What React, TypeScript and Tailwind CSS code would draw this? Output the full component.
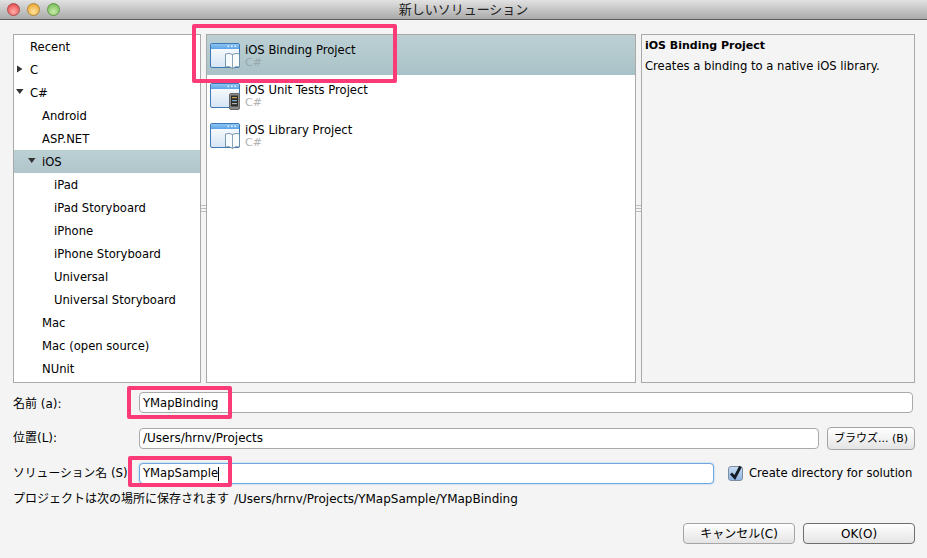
import React from 'react';

const font = { sans: "font-['DejaVu_Sans','Noto_Sans_CJK_JP',sans-serif]" };

const leftRows = [
  { label: 'Recent', indent: 'pl-[16px]' },
  { label: 'C', indent: 'pl-[16px]', arrow: 'right', arrowPad: 'left-[1px]' },
  { label: 'C#', indent: 'pl-[16px]', arrow: 'down', arrowPad: 'left-[2px]' },
  { label: 'Android', indent: 'pl-[28px]' },
  { label: 'ASP.NET', indent: 'pl-[28px]' },
  { label: 'iOS', indent: 'pl-[28px]', arrow: 'down', arrowPad: 'left-[14px]', selected: true },
  { label: 'iPad', indent: 'pl-[40px]' },
  { label: 'iPad Storyboard', indent: 'pl-[40px]' },
  { label: 'iPhone', indent: 'pl-[40px]' },
  { label: 'iPhone Storyboard', indent: 'pl-[40px]' },
  { label: 'Universal', indent: 'pl-[40px]' },
  { label: 'Universal Storyboard', indent: 'pl-[40px]' },
  { label: 'Mac', indent: 'pl-[28px]' },
  { label: 'Mac (open source)', indent: 'pl-[28px]' },
  { label: 'NUnit', indent: 'pl-[28px]' },
];

const projects = [
  { name: 'iOS Binding Project', kind: 'book', selected: true },
  { name: 'iOS Unit Tests Project', kind: 'phone' },
  { name: 'iOS Library Project', kind: 'book' },
];

const Arrow = ({ dir }: { dir: string }) => (
  <svg width="9" height="9" viewBox="0 0 9 9">
    {dir === 'right' ? <path d="M2 1.5 L7.5 5 L2 8.5 Z" fill="#333" /> : <path d="M0 2 L7.5 2 L3.75 7 Z" fill="#333" />}
  </svg>
);

const ProjectIcon = ({ kind }: { kind: string }) => (
  <svg width="31" height="28" viewBox="0 0 31 28" className="shrink-0">
    <defs>
      <linearGradient id="winBody" x1="0" y1="0" x2="0" y2="1">
        <stop offset="0" stopColor="#ffffff" />
        <stop offset="1" stopColor="#d5e4f4" />
      </linearGradient>
      <linearGradient id="winBar" x1="0" y1="0" x2="0" y2="1">
        <stop offset="0" stopColor="#8cc4f5" />
        <stop offset="1" stopColor="#5fa3e6" />
      </linearGradient>
    </defs>
    <rect x="0.5" y="1.5" width="29" height="24" rx="1.5" fill="url(#winBody)" stroke="#3f79b5" />
    <rect x="1" y="2" width="28" height="5" fill="url(#winBar)" />
    <rect x="17.5" y="3.5" width="1.6" height="1.6" fill="#e4f2ff" />
    <rect x="21" y="3.5" width="1.6" height="1.6" fill="#e4f2ff" />
    <rect x="24.5" y="3.5" width="1.6" height="1.6" fill="#e4f2ff" />
    {kind === 'book' ? (
      <g>
        <path d="M15.5 12 Q19 10.5 22.5 12.5 Q26 10.5 29.5 12 L29.5 25 Q26 23.5 22.5 26.5 Q19 23.5 15.5 25 Z" fill="#f8fbfc" stroke="#5c8399" strokeWidth="0.8" />
        <path d="M22.5 12.5 V26.5" stroke="#6c8ea3" strokeWidth="0.8" />
      </g>
    ) : (
      <g>
        <rect x="19.5" y="11.5" width="10" height="16" rx="1.5" fill="#8a8a88" stroke="#666" />
        <rect x="21" y="13.5" width="7" height="11" fill="#2b2b2b" />
        <rect x="22" y="15" width="5" height="1.2" fill="#c9a24b" />
        <rect x="22" y="18" width="5" height="1.2" fill="#7fa7c7" />
        <rect x="22" y="21" width="5" height="1.2" fill="#b0b0b0" />
      </g>
    )}
  </svg>
);

const Grip = () => (
  <div className="w-[5px] shrink-0 flex flex-col justify-center items-center gap-[2px]">
    <span className="w-[5px] h-px bg-[#bdbdbd]" />
    <span className="w-[5px] h-px bg-[#bdbdbd]" />
    <span className="w-[5px] h-px bg-[#bdbdbd]" />
  </div>
);

const Field = ({ value, focused, caret, className }: { value?: string; focused?: boolean; caret?: boolean; className: string }) => (
  <div
    className={`h-[21px] bg-white rounded-[4px] border flex items-center pl-[3px] text-black ${
      focused ? 'border-[#6ea6e0] shadow-[0_0_2px_#8fbdf0]' : 'border-[#a9a9a9]'
    } ${className}`}
  >
    {value}
    {caret && <span className="w-px h-[14px] bg-black" />}
  </div>
);

const PushButton = ({ label, strong, className }: { label: string; strong?: boolean; className: string }) => (
  <div
    className={`rounded-[4px] border bg-gradient-to-b from-white to-[#e4e4e4] flex items-center justify-center text-black ${
      strong ? 'border-[#6e6e6e]' : 'border-[#a5a5a5]'
    } ${className}`}
  >
    {label}
  </div>
);

export default function App() {
  return (
    <div className={`relative w-[927px] h-[558px] overflow-hidden bg-[#f4f4f4] ${font.sans}`}>
      {/* title bar */}
      <div className="relative h-[20px] bg-gradient-to-b from-[#e2e2e2] to-[#aaaaaa] border-b border-[#5f5f5f] flex items-center justify-center text-[13px] text-[#222]">
        <div className="absolute left-[7px] top-[3px] flex gap-[7px]">
          <span className="w-[13px] h-[13px] rounded-full border border-[#b0484a] bg-[radial-gradient(circle_at_50%_70%,#ffb0a8,#e2383c)]" />
          <span className="w-[13px] h-[13px] rounded-full border border-[#b58633] bg-[radial-gradient(circle_at_50%_70%,#ffe49a,#e59a23)]" />
          <span className="w-[13px] h-[13px] rounded-full border border-[#5e9a42] bg-[radial-gradient(circle_at_50%_70%,#c8ecaa,#6bb348)]" />
        </div>
        新しいソリューション
      </div>

      {/* panels */}
      <div className="flex h-[349px] mt-[14px] ml-[13px] w-[902px]">
        <div className="w-[188px] shrink-0 bg-white border border-[#a9a9a9] text-[11.6px] text-black">
          {leftRows.map((row) => (
            <div
              key={row.label}
              className={`relative h-[23px] flex items-center pt-[2px] ${row.indent} ${row.selected ? 'bg-gradient-to-b from-[#bcd0d4] to-[#afc6cb]' : ''}`}
            >
              {row.arrow && (
                <span className={`absolute top-[6px] ${row.arrowPad}`}>
                  <Arrow dir={row.arrow} />
                </span>
              )}
              {row.label}
            </div>
          ))}
        </div>
        <Grip />
        <div className="w-[430px] shrink-0 bg-white border border-[#a9a9a9]">
          {projects.map((p) => (
            <div
              key={p.name}
              className={`h-[40px] flex items-start pl-[3px] pt-[7px] ${p.selected ? 'bg-gradient-to-b from-[#bcd0d4] to-[#a9c2c7]' : ''}`}
            >
              <ProjectIcon kind={p.kind} />
              <div className="flex flex-col ml-[4px] pt-[1px]">
                <span className="text-[11.6px] leading-[14px] text-black">{p.name}</span>
                <span className={`text-[11px] leading-[11px] ${p.selected ? 'text-[#98a8ab]' : 'text-[#b4b4b4]'}`}>C#</span>
              </div>
            </div>
          ))}
        </div>
        <Grip />
        <div className="flex-1 bg-[#f4f4f4] border border-[#a9a9a9] px-[3px] pt-[3px] text-[11.6px] leading-[16px] text-black">
          <div className="font-bold text-[11px]">iOS Binding Project</div>
          <div className="mt-[4px]">Creates a binding to a native iOS library.</div>
        </div>
      </div>

      {/* form */}
      <div className="ml-[13px] w-[902px] text-[11.6px] text-black">
        <div className="flex items-center mt-[9px] h-[21px]">
          <span className="w-[126px] shrink-0 text-[12px] pt-[2px]">名前 (a):</span>
          <Field value="YMapBinding" className="w-[774px] pt-[2px]" />
        </div>
        <div className="flex items-center mt-[14px] h-[23px]">
          <span className="w-[126px] shrink-0 text-[12px] pb-[2px]">位置(L):</span>
          <Field value="/Users/hrnv/Projects" className="w-[680px] text-[12px] pb-[2px]" />
          <PushButton label="ブラウズ... (B)" className="ml-[8px] w-[88px] h-[23px] text-[11px] pt-[1px]" />
        </div>
        <div className="flex items-center mt-[12px] h-[23px]">
          <span className="w-[126px] shrink-0 whitespace-nowrap text-[11.8px]">ソリューション名 (S)</span>
          <Field value="YMapSample" focused caret className="w-[575px]" />
          <span className="ml-[14px] w-[15px] h-[15px] rounded-[3px] border border-[#7d8ea3] bg-gradient-to-b from-[#c9dcf3] to-[#8eb4e2] flex items-center justify-center">
            <svg width="15" height="15" viewBox="0 0 15 15" className="overflow-visible">
              <path d="M3 7.5 L6.8 11.5 L12.5 0.5" fill="none" stroke="#141c28" strokeWidth="2.8" />
            </svg>
          </span>
          <span className="ml-[6px] whitespace-nowrap">Create directory for solution</span>
        </div>
        <div className="mt-[5px] h-[18px] flex items-center whitespace-nowrap text-[12px]">
          プロジェクトは次の場所に保存されます
          <span className="ml-[5px]">/Users/hrnv/Projects/YMapSample/YMapBinding</span>
        </div>
        <div className="flex justify-end gap-[8px] mt-[15px] text-[12px]">
          <PushButton label="キャンセル(C)" className="w-[112px] h-[21px]" />
          <PushButton label="OK(O)" strong className="w-[112px] h-[21px]" />
        </div>
      </div>

      {/* annotation boxes */}
      <div className="absolute left-[192px] top-[24px] w-[205px] h-[59px] border-[4px] border-[#fb3a78] rounded-[2px]" />
      <div className="absolute left-[127px] top-[386px] w-[105px] h-[33px] border-[4px] border-[#fb3a78] rounded-[2px]" />
      <div className="absolute left-[128px] top-[456px] w-[104px] h-[31px] border-[4px] border-[#fb3a78] rounded-[2px]" />
    </div>
  );
}
